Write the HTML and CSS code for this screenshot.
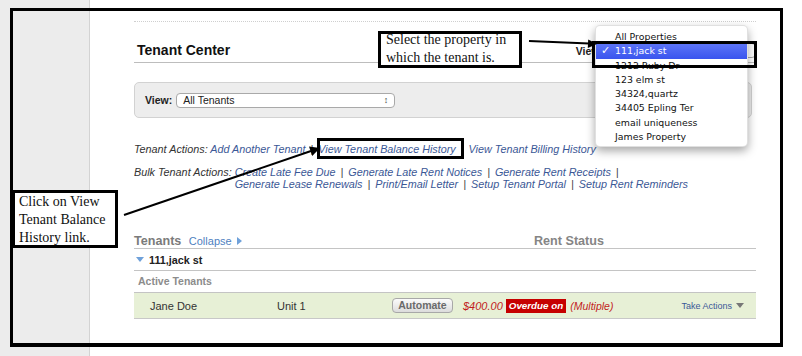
FILE: index.html
```html
<!DOCTYPE html>
<html>
<head>
<meta charset="utf-8">
<title>Tenant Center</title>
<link rel="stylesheet" href="styles.css">
</head>
<body>
<div class="page">
  <aside class="sidebar"></aside>
  <main class="main">
    <div class="content">
      <div class="title-row">
        <h1 class="title">Tenant Center</h1>
        <div class="prop-view">
          <span class="lbl">View:</span>
          <span class="select prop-select"><span></span><span class="updown">&#8597;</span></span>
        </div>
      </div>

      <div class="viewbar">
        <span class="lbl">View:</span>
        <span class="select tenants-select"><span>All Tenants</span><span class="updown">&#8597;</span></span>
      </div>

      <div class="actions">
        <p class="act-line"><span class="act-label">Tenant Actions:</span> <a class="lnk">Add Another Tenant</a><span class="sep">|</span><a class="lnk">View Tenant Balance History</a><span class="sep">|</span><a class="lnk">View Tenant Billing History</a></p>
        <div class="bulk">
          <span class="act-label bulk-label">Bulk Tenant Actions:</span>
          <div class="bulk-links">
            <p><a class="lnk">Create Late Fee Due</a><span class="sep">|</span><a class="lnk">Generate Late Rent Notices</a><span class="sep">|</span><a class="lnk">Generate Rent Receipts</a><span class="sep">|</span></p>
            <p><a class="lnk">Generate Lease Renewals</a><span class="sep">|</span><a class="lnk">Print/Email Letter</a><span class="sep">|</span><a class="lnk">Setup Tenant Portal</a><span class="sep">|</span><a class="lnk">Setup Rent Reminders</a></p>
          </div>
        </div>
      </div>

      <section class="tenants">
        <div class="thead">
          <div class="tleft"><span class="th">Tenants</span> <a class="collapse">Collapse <span class="tri-right"></span></a></div>
          <div class="th rent-status">Rent Status</div>
        </div>
        <div class="prop-row"><span class="tri-down"></span><span class="prop-name">111,jack st</span></div>
        <div class="active-row">Active Tenants</div>
        <div class="tenant-row">
          <span class="t-name">Jane Doe</span>
          <span class="t-unit">Unit 1</span>
          <span class="btn">Automate</span>
          <span class="amount">$400.00</span>
          <span class="badge">Overdue on</span>
          <span class="multiple">(Multiple)</span>
          <a class="take">Take Actions <span class="tri-small"></span></a>
        </div>
      </section>
    </div>
  </main>
</div>

<ul class="menu">
  <li class="item">All Properties</li>
  <li class="item selected"><span class="check">&#10003;</span>111,jack st</li>
  <li class="item">1212 Ruby Dr</li>
  <li class="item">123 elm st</li>
  <li class="item">34324,quartz</li>
  <li class="item">34405 Epling Ter</li>
  <li class="item">email uniqueness</li>
  <li class="item">James Property</li>
</ul>

<div class="frame"></div>
<div class="hl hl-menu"></div>
<div class="hl hl-link"></div>
<div class="callout callout-prop"><p>Select the property in<br>which the tenant is.</p></div>
<div class="callout callout-link"><p>Click on View<br>Tenant Balance<br>History link.</p></div>

<svg class="arrows" width="802" height="356" viewBox="0 0 802 356">
  <line x1="529" y1="41" x2="589" y2="43.6" stroke="#000" stroke-width="2"/>
  <polygon points="597,44 588.2,39.4 587.8,48" fill="#000"/>
  <line x1="124" y1="215" x2="311" y2="151" stroke="#000" stroke-width="2"/>
  <polygon points="320,148 312.2,156 309,146.6" fill="#000"/>
</svg>
</body>
</html>
```
FILE: styles.css
```css
* { box-sizing: border-box; margin: 0; padding: 0; }
html, body { width: 802px; height: 356px; overflow: hidden; }
body {
  position: relative;
  background: #fff;
  font-family: "Liberation Sans", Arial, Helvetica, sans-serif;
  color: #222;
}
a { text-decoration: none; }
ul { list-style: none; }

.page { display: flex; height: 356px; }
.sidebar {
  width: 90px;
  flex: none;
  background: #ececec;
  border-right: 1px solid #d3d3d3;
}
.main { flex: 1; padding: 21px 46px 0 44px; }
.content { border-top: 1px dotted #cfcfcf; }

/* title */
.title-row {
  display: flex;
  justify-content: space-between;
  align-items: flex-end;
  height: 41px;
  padding-bottom: 3px;
  border-bottom: 1px solid #bdbdbd;
}
.title {
  font-size: 14px;
  line-height: 18px;
  font-weight: bold;
  color: #111;
  padding-left: 3px;
}
.prop-view { display: flex; align-items: center; gap: 3px; margin-bottom: 1px; }
.lbl { font-size: 10.5px; font-weight: bold; color: #222; }
.select {
  display: flex;
  justify-content: space-between;
  align-items: center;
  height: 15px;
  padding: 0 6px;
  background: #fff;
  border: 1px solid #a9a9a9;
  border-radius: 4px;
  font-size: 10.5px;
  color: #222;
}
.updown { font-size: 9px; color: #444; }
.prop-select { width: 150px; }

/* view bar */
.viewbar {
  display: flex;
  align-items: center;
  gap: 4px;
  height: 36px;
  margin-top: 19px;
  margin-right: 4px;
  padding: 0 0 0 10px;
  background: #ededed;
  border: 1px solid #d2d2d2;
  border-radius: 5px;
}
.tenants-select { width: 219px; height: 15px; }

/* actions */
.actions { margin-top: 24px; font-size: 10.8px; font-style: italic; color: #333; }
.act-line { line-height: 14px; }
.lnk { color: #3b5896; }
.sep { color: #444; margin: 0 5px; }
.bulk { display: flex; margin-top: 10px; line-height: 12px; }
.bulk-label { flex: none; }
.bulk-links { margin-left: 3px; }

/* tenants table */
.tenants { margin-top: 43px; }
.thead {
  display: flex;
  align-items: flex-end;
  line-height: 14px;
  border-bottom: 1px solid #c4c4c4;
}
.tleft { width: 400px; flex: none; }
.th { font-size: 12.6px; font-weight: bold; color: #7b7b7b; }
.rent-status { color: #858585; }
.collapse { font-size: 11px; color: #4f7fbf; margin-left: 3px; }
.tri-right {
  display: inline-block;
  width: 0; height: 0;
  border-top: 4px solid transparent;
  border-bottom: 4px solid transparent;
  border-left: 5px solid #6fa1da;
  margin-left: 2px;
}
.prop-row {
  display: flex;
  align-items: center;
  height: 22px;
  border-bottom: 1px solid #c4c4c4;
  padding-left: 2px;
}
.tri-down {
  width: 0; height: 0;
  border-left: 4.5px solid transparent;
  border-right: 4.5px solid transparent;
  border-top: 5px solid #6fa1da;
  margin-right: 5px;
}
.prop-name { font-size: 10.8px; font-weight: bold; color: #222; }
.active-row {
  height: 22px;
  line-height: 21px;
  padding-left: 4px;
  font-size: 10.5px;
  font-weight: bold;
  color: #8c8c8c;
  border-bottom: 1px solid #c4c4c4;
}
.tenant-row {
  display: flex;
  align-items: center;
  height: 26px;
  padding: 0 12px 0 16px;
  background: #e7f0d6;
  border-bottom: 1px solid #c8c8c8;
  font-size: 11px;
  color: #333;
}
.t-name { width: 127px; flex: none; }
.t-unit { width: 115px; flex: none; }
.btn {
  width: 61px;
  height: 15px;
  line-height: 13px;
  text-align: center;
  margin-right: 10px;
  font-size: 10.5px;
  font-weight: bold;
  color: #6a6a6a;
  background: linear-gradient(#fbfbfb, #dcdcdc);
  border: 1px solid #a8a8a8;
  border-radius: 4px;
}
.amount { font-style: italic; color: #c21d1d; margin-right: 3px; }
.badge {
  background: #c60000;
  color: #fff;
  font-weight: bold;
  font-style: italic;
  font-size: 9.8px;
  padding: 1px 3px;
  line-height: 12px;
}
.multiple { font-style: italic; color: #c21d1d; font-size: 10.5px; margin-left: 4px; }
.take { margin-left: auto; font-size: 9px; color: #3b5896; display: flex; align-items: center; gap: 4px; }
.tri-small {
  width: 0; height: 0;
  border-left: 4px solid transparent;
  border-right: 4px solid transparent;
  border-top: 5px solid #777;
}

/* popup menu (overlay) */
.menu {
  position: absolute;
  left: 595px;
  top: 25px;
  width: 153px;
  height: 122px;
  padding-top: 4px;
  background: #fff;
  border: 1px solid rgba(0,0,0,0.12);
  border-radius: 5px;
  box-shadow: 0 4px 10px rgba(0,0,0,0.35);
  font-family: "DejaVu Sans", Verdana, sans-serif;
  font-size: 9.4px;
  color: #111;
}
.item { position: relative; height: 14.3px; line-height: 14.3px; padding-left: 19px; }
.item.selected {
  background: linear-gradient(#5c74f7, #3954ee);
  color: #fff;
}
.check { position: absolute; left: 5px; top: 0; font-size: 11px; font-weight: bold; }

/* annotation overlays */
.frame {
  position: absolute;
  left: 10px;
  top: 8px;
  width: 773px;
  height: 339px;
  border: 3px solid #000;
  border-bottom-width: 4px;
}
.hl { position: absolute; border: 3px solid #000; }
.hl-menu { left: 592px; top: 41px; width: 165px; height: 27px; }
.hl-link { left: 317px; top: 138px; width: 147px; height: 21px; }
.callout {
  position: absolute;
  background: #fff;
  border: 3px solid #000;
  font-family: "Liberation Serif", "Times New Roman", serif;
  font-size: 14px;
  line-height: 18px;
  color: #111;
}
.callout-prop { left: 378px; top: 31px; width: 144px; height: 37px; padding-left: 5px; }
.callout-prop p { margin-top: -3px; }
.callout-link { left: 12px; top: 190px; width: 106px; height: 58px; padding-left: 4px; }
.arrows { position: absolute; left: 0; top: 0; pointer-events: none; }
```
